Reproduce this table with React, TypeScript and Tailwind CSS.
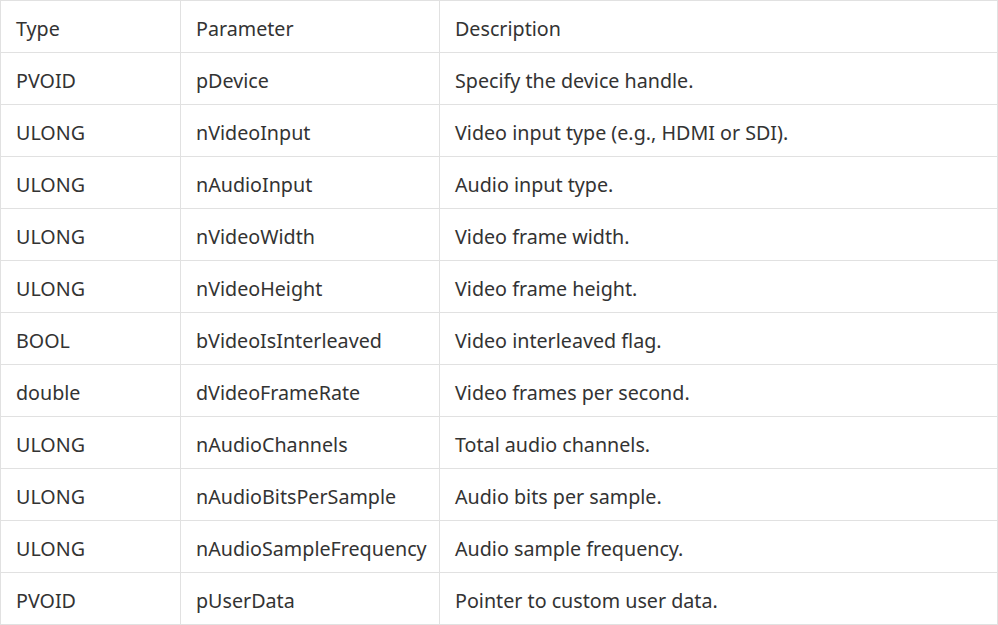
const rows: [string, string, string][] = [
  ["PVOID", "pDevice", "Specify the device handle."],
  ["ULONG", "nVideoInput", "Video input type (e.g., HDMI or SDI)."],
  ["ULONG", "nAudioInput", "Audio input type."],
  ["ULONG", "nVideoWidth", "Video frame width."],
  ["ULONG", "nVideoHeight", "Video frame height."],
  ["BOOL", "bVideoIsInterleaved", "Video interleaved flag."],
  ["double", "dVideoFrameRate", "Video frames per second."],
  ["ULONG", "nAudioChannels", "Total audio channels."],
  ["ULONG", "nAudioBitsPerSample", "Audio bits per sample."],
  ["ULONG", "nAudioSampleFrequency", "Audio sample frequency."],
  ["PVOID", "pUserData", "Pointer to custom user data."],
];

const cell = "border border-[#e1e1e1] h-[52px] px-[15px] pt-[5px] pb-0 align-middle text-left font-normal";

const App = () => {
  return (
    <div className="bg-white w-[998px] text-[#333] text-[19.7px] leading-[28px] font-['Noto_Sans',sans-serif]">
      <table className="w-[998px] table-fixed border-collapse">
        <colgroup>
          <col className="w-[180px]" />
          <col className="w-[259px]" />
          <col />
        </colgroup>
        <thead>
          <tr>
            <th className={cell}>Type</th>
            <th className={cell}>Parameter</th>
            <th className={cell}>Description</th>
          </tr>
        </thead>
        <tbody>
          {rows.map(([type, param, desc]) => (
            <tr key={param}>
              <td className={cell}>{type}</td>
              <td className={cell}>{param}</td>
              <td className={cell}>{desc}</td>
            </tr>
          ))}
        </tbody>
      </table>
    </div>
  );
};

export default App;
